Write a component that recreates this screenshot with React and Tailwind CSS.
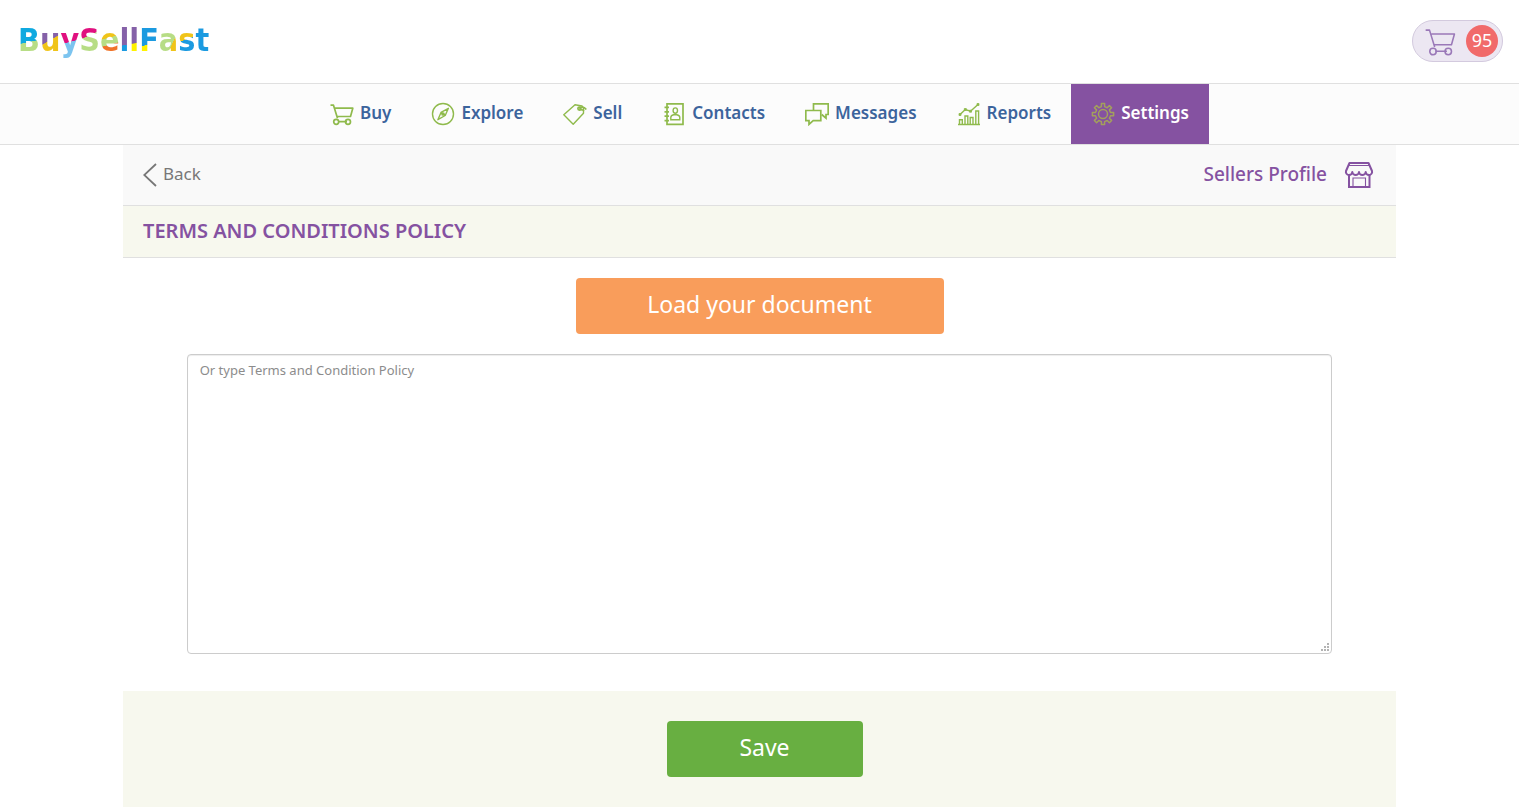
const LOGO = [
  ['B', 'bg-[linear-gradient(168deg,#0fa9e0_54%,#b7dd85_55%)]'],
  ['u', 'bg-[linear-gradient(150deg,#8561a8_50%,#f0c419_51%)]'],
  ['y', 'bg-[linear-gradient(165deg,#e0107f_54%,#7cc4ef_55%)]'],
  ['S', 'bg-[linear-gradient(155deg,#e0107f_40%,#b7dd85_41%)]'],
  ['e', 'bg-[linear-gradient(165deg,#f0c419_44%,#b7dd85_45%,#b7dd85_60%,#f0742a_61%)]'],
  ['l', 'bg-[linear-gradient(170deg,#8561a8_62%,#1b9ae0_63%)]'],
  ['l', 'bg-[linear-gradient(175deg,#8561a8_58%,#fff200_59%)]'],
  ['F', 'bg-[linear-gradient(165deg,#1b9ae0_59%,#fff200_60%)]'],
  ['a', 'bg-[linear-gradient(115deg,#b7dd85_64%,#f0c419_65%)]'],
  ['s', 'bg-[linear-gradient(160deg,#f0c419_48%,#1b9ae0_49%)]'],
  ['t', 'bg-[#1b9ae0]'],
];

function Icon({ children, className = 'size-6', strokeWidth = 1.7 }) {
  return (
    <svg
      aria-hidden="true"
      viewBox="0 0 24 24"
      className={`shrink-0 ${className}`}
      fill="none"
      stroke="currentColor"
      strokeWidth={strokeWidth}
    >
      {children}
    </svg>
  );
}

function CartShape() {
  return (
    <>
      <path d="M.5 3.2h3l4 13M5 6.2h17.8l-2.3 8.3H7.2M8 19.6h9" strokeLinejoin="round" />
      <circle cx="6.2" cy="19.8" r="2.5" />
      <circle cx="18" cy="19.8" r="2.5" />
    </>
  );
}

const NAV = [
  ['Buy', <CartShape />],
  ['Explore', <>
    <circle cx="12" cy="12" r="10.5" strokeWidth="1.4" />
    <path d="M17.4 6.3l-3.2 7.2-7.3 4.2 3.1-7.3zM10 10.4l4.2 3.1" strokeLinejoin="round" strokeWidth="1.4" />
    <circle cx="12" cy="12" r="1" />
  </>],
  ['Sell', <>
    <path d="M20.5 6.2l-1.500-2.200-7-1.300L.8 12.8l9.400 9.400L20.500 11.200z" strokeLinejoin="round" strokeWidth="1.4" />
    <circle cx="16.4" cy="6.600" r="1.5" />
    <path d="M16 6.300c2.500-1.500 5.500-1.200 7.300 1.200M16.500 7.600c2 .2 3.500 0 4.500 1.200" />
  </>],
  ['Contacts', <>
    <path d="M5 1.800h16v20.500H5zM2.500 5.300h4.500M2.500 9.800h4.500M2.500 14.200h4.500M2.500 18.700h4.500" />
    <ellipse cx="13.300" cy="8.6" rx="2.2" ry="2.7" strokeWidth="1.4" />
    <path d="M8.800 17.800v-2.300c0-2 2-2.500 3-2.800h3c1.200.3 3 .8 3 2.800v2.300z" strokeWidth="1.4" />
  </>],
  ['Messages', <>
    <path d="M8.500 8V1.800h14.700V12.500h-2.200v3.700l-4.300-3.700" />
    <path d="M.8 8.500h15v10.200H8.200l-4.200 3.700v-3.700H.8z" />
  </>],
  ['Reports', <>
    <path d="M1 22.500h22M2.500 22v-4.200h2.800V22M8 22v-8h2.800v8M13.200 22v-6.500H16V22M18.800 22V9h2.800v13" strokeWidth="1.400" />
    <path d="M3 12.500l5.300-5 5.200 1.700L21 2.500" strokeWidth="1.5" />
    <path d="M2 11.500h2v2H2zM7.300 6.500h2v2h-2zM12.500 8.200h2v2h-2zM20 1.500h2v2h-2z" fill="currentColor" strokeWidth=".8" />
  </>],
  ['Settings', <>
    <path
      d="M10.400 1.500h3.200v3.100l2.600 1.100 2.200-2.200 2.200 2.200-2.200 2.200 1.100 2.600h3.100v3.200h-3.100l-1.100 2.500 2.200 2.200-2.200 2.300-2.200-2.200-2.600 1.100v3h-3.200v-3l-2.600-1.100-2.200 2.200-2.200-2.300 2.200-2.200-1.100-2.500H1.400v-3.200h3.100l1.100-2.600-2.200-2.200 2.200-2.200 2.200 2.200 2.600-1.100z"
      strokeLinejoin="round"
      strokeWidth="1.5"
    />
    <circle cx="12" cy="12" r="4.500" strokeWidth="1.5" />
  </>],
];

function Header() {
  return (
    <header className="flex h-[83px] items-start justify-between px-4 pt-5">
      <a
        href="#home"
        aria-label="BuySellFast"
        className="ml-0.5 flex font-['DejaVu_Sans_Condensed','DejaVu_Sans',sans-serif] text-[32px] leading-[40px] font-bold"
      >
        {LOGO.map(([letter, fill], i) => (
          <span key={i} className={`bg-clip-text text-transparent ${fill}`}>{letter}</span>
        ))}
      </a>
      <a
        href="#cart"
        aria-label="Cart, 95 items"
        className="flex h-[42px] items-center gap-2.5 rounded-full border border-[#d3cade] bg-[#ece7f2] pr-1 pl-3 text-[#9a78b8]"
      >
        <Icon className="size-[31px]" strokeWidth={1.2}><CartShape /></Icon>
        <span className="flex size-8 items-center justify-center rounded-full bg-[#f16a6a] pb-0.5 text-lg text-white">95</span>
      </a>
    </header>
  );
}

function Nav() {
  return (
    <nav className="flex justify-center border-y border-[#e0e0e0] bg-[#fcfcfc]">
      {NAV.map(([label, shape]) => {
        const active = label === 'Settings';
        return (
          <a
            key={label}
            href={`#${label.toLowerCase()}`}
            aria-current={active ? 'page' : undefined}
            className={`flex h-[60px] items-center gap-1.5 px-5 text-[17px] font-semibold ${active ? 'bg-[#8552a1] text-white' : 'text-[#3c649c]'}`}
          >
            <span className={active ? 'text-[#a3a05c]' : 'text-[#8fba4c]'}><Icon>{shape}</Icon></span>
            <span className="pb-0.5">{label}</span>
          </a>
        );
      })}
    </nav>
  );
}

export default function App() {
  return (
    <div className="min-h-screen bg-white font-['Noto_Sans',sans-serif]">
      <Header />
      <Nav />
      <main className="mx-auto max-w-[1273px]">
        <div className="flex h-[61px] items-center justify-between border-b border-[#e0e0e0] bg-[#f9f9f9] px-5">
          <a href="#back" className="flex items-center gap-1.5 text-[17px] text-[#777]">
            <svg aria-hidden="true" viewBox="0 0 14 24" className="h-6 w-3.5" fill="none" stroke="currentColor" strokeWidth="1.8">
              <path d="M13 1L1.200 12 13 23" />
            </svg>
            <span className="pb-0.5">Back</span>
          </a>
          <a href="#profile" className="flex items-center gap-[17px] text-[19px] font-medium text-[#8552a1]">
            <span className="pb-0.5">Sellers Profile</span>
            <svg aria-hidden="true" viewBox="0 0 32 32" className="size-8" fill="none" stroke="currentColor" strokeWidth="2">
              <path d="M5.500 4h19L28 12c.6 2-1 4-3 4s-3.300-1.500-3.300-3c0 1.500-1.500 3-3.400 3S15 14.500 15 13c0 1.500-1.500 3-3.300 3s-3.400-1.500-3.400-3c0 1.500-1.300 3-3.300 3s-3.600-2-3-4z" strokeLinejoin="round" />
              <path d="M5 16v12h20.500V16" />
              <path d="M5 6.500h20M9 28v-9h12.500v9" strokeWidth="1.100" />
            </svg>
          </a>
        </div>
        <h1 className="flex h-[52px] items-center border-b border-[#e0e0e0] bg-[#f7f8ee] px-5 pb-0.5 text-xl font-semibold text-[#8552a1] uppercase">
          Terms and Conditions Policy
        </h1>
        <form>
          <div className="flex flex-col items-center pt-5 pb-[37px]">
            <button type="button" className="h-14 w-[368px] rounded bg-[#f99d5b] pb-1 text-[23px] text-white">
              Load your document
            </button>
            <div className="relative mt-5 flex w-[90%]">
              <textarea
                aria-label="Terms and Condition Policy"
                placeholder="Or type Terms and Condition Policy"
                className="h-[300px] w-full resize-none rounded border border-[#ccc] px-3 py-[5px] text-[13px] leading-5 shadow-[inset_0_1px_1px_rgba(0,0,0,0.075)] placeholder:text-[#8c8c8c]"
              />
              <svg aria-hidden="true" viewBox="0 0 9 9" className="absolute right-0.5 bottom-0.5 size-[9px]" fill="#b3b3b3">
                <path d="M0 6h2v2H0zM3 6h2v2H3zM6 6h2v2H6zM3 3h2v2H3zM6 3h2v2H6zM6 0h2v2H6z" />
              </svg>
            </div>
          </div>
          <div className="flex justify-center bg-[#f7f8ee] py-[30px] pl-2.5">
            <button type="submit" className="h-14 w-[196px] rounded bg-[#68af41] pb-1 text-[23px] text-white">Save</button>
          </div>
        </form>
      </main>
    </div>
  );
}
